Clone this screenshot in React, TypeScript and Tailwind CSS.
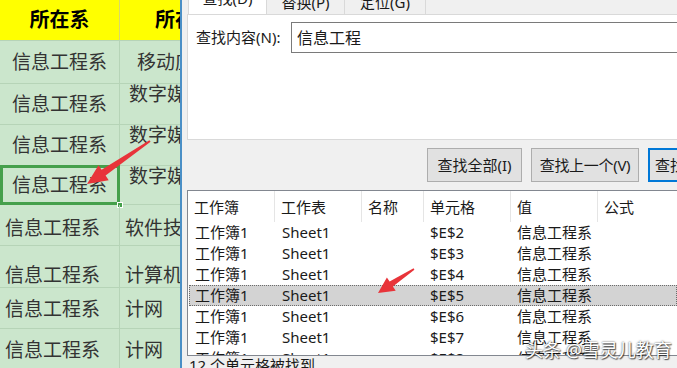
import React from 'react'

const cjk = "font-['Noto_Sans','Noto_Sans_CJK_SC',sans-serif]"

type Row = { h: number; a: string; aCls: string; b: string; bCls: string; selected?: boolean }

const sheetRows: Row[] = [
  { h: 43, a: '信息工程系', aCls: 'items-center justify-center', b: '移动应', bCls: 'items-center pl-[17px]' },
  { h: 41, a: '信息工程系', aCls: 'items-center justify-center', b: '数字媒体', bCls: 'items-start pl-[9px] pt-[1px]' },
  { h: 41, a: '信息工程系', aCls: 'items-center justify-center', b: '数字媒体', bCls: 'items-start pl-[9px] pt-[1px]' },
  { h: 39, a: '信息工程系', aCls: 'items-center justify-center', b: '数字媒体', bCls: 'items-start pl-[9px] pt-[1px]', selected: true },
  { h: 41, a: '信息工程系', aCls: 'items-center pl-[5px] pt-[6px]', b: '软件技术', bCls: 'items-center pl-[5px] pt-[6px]' },
  { h: 42, a: '信息工程系', aCls: 'items-end pl-[5px] pb-[2px]', b: '计算机', bCls: 'items-end pl-[5px] pb-[2px]' },
  { h: 41, a: '信息工程系', aCls: 'items-center pl-[5px] pt-[2px]', b: '计网', bCls: 'items-center pl-[5px] pt-[2px]' },
  { h: 40, a: '信息工程系', aCls: 'items-center pl-[5px] pt-[4px]', b: '计网', bCls: 'items-center pl-[5px] pt-[4px]' },
]

const cols = [
  { label: '工作簿', w: 87 },
  { label: '工作表', w: 87 },
  { label: '名称', w: 62 },
  { label: '单元格', w: 87 },
  { label: '值', w: 87 },
  { label: '公式', w: 120 },
]

const results = ['$E$2', '$E$3', '$E$4', '$E$5', '$E$6', '$E$7', '$E$8']

function Sheet() {
  return (
    <div className={`w-[180px] shrink-0 flex flex-col bg-[#cbe6cc] text-[#333] ${cjk}`}>
      <div className="h-[40px] shrink-0 flex bg-[#ffff00] text-black font-bold text-[20px]">
        <div className="w-[120px] flex items-center justify-center border-r border-[#d8d86a]">所在系</div>
        <div className="flex-1 flex items-center pl-[35px] whitespace-nowrap overflow-hidden">所在班级</div>
      </div>
      {sheetRows.map((r, i) => (
        <div key={i} className="flex shrink-0 border-t border-[#b6d4b7] text-[19px] leading-none" style={{ height: r.h }}>
          <div className={`relative w-[120px] flex border-r border-[#b6d4b7] ${r.aCls}`}>
            <span className="whitespace-nowrap">{r.a}</span>
            {r.selected && (
              <>
                <div className="absolute -top-[1px] left-0 right-[-1px] -bottom-[1px] border-[3px] border-[#45a04b]" />
                <div className="absolute right-[-4px] bottom-[-4px] w-[6px] h-[6px] bg-[#45a04b] border border-white" />
              </>
            )}
          </div>
          <div className={`flex-1 flex overflow-hidden ${r.bCls}`}>
            <span className="whitespace-nowrap">{r.b}</span>
          </div>
        </div>
      ))}
    </div>
  )
}

function FindDialog() {
  return (
    <div className={`flex-1 flex flex-col bg-[#f0f0f0] border-l-2 border-[#4a8fc6] pl-[5px] text-[15px] text-[#1a1a1a] ${cjk} overflow-hidden`}>
      {/* tabs, cut off at the top */}
      <div className="h-[14px] shrink-0 overflow-hidden flex items-end">
        <div className="flex h-[26px] items-stretch ml-[1px]">
          <div className="w-[79px] bg-white border-x border-[#d9d9d9] flex items-center justify-center pb-[5px]">查找(D)</div>
          <div className="w-[78px] border-r border-[#d9d9d9] flex items-center justify-center pt-[2px]">替换(P)</div>
          <div className="w-[81px] border-r border-[#d9d9d9] flex items-center justify-center pt-[2px]">定位(G)</div>
        </div>
      </div>

      {/* tab page */}
      <div className="h-[126px] shrink-0 bg-white border border-[#d9d9d9] border-r-0 pt-[7px] pl-[8px] flex">
        <div className="flex items-start h-[31px]">
          <div className="w-[95px] h-[31px] flex items-center whitespace-nowrap">查找内容(N):</div>
          <div className="w-[400px] h-[31px] border border-[#7a7a7a] border-r-0 flex items-center pl-[5px] text-[16px]">信息工程</div>
        </div>
      </div>

      {/* buttons */}
      <div className="h-[50px] shrink-0 flex items-start pt-[8px] pl-[240px] gap-[9px]">
        <button className="w-[95px] h-[34px] shrink-0 bg-[#e1e1e1] border border-[#adadad] whitespace-nowrap">查找全部(I)</button>
        <button className="w-[108px] h-[34px] shrink-0 bg-[#e1e1e1] border border-[#adadad] whitespace-nowrap tracking-[-0.3px]">查找上一个(V)</button>
        <button className="w-[110px] h-[34px] shrink-0 bg-[#e1e1e1] border-2 border-[#0078d7] whitespace-nowrap text-left pl-[5px]">查找下一个(F)</button>
      </div>

      {/* result list */}
      <div className="h-[166px] shrink-0 bg-white border border-[#828790] border-r-0 flex flex-col overflow-hidden">
        <div className="h-[31px] shrink-0 flex">
          {cols.map((c, i) => (
            <div key={i} className="shrink-0 flex items-center pl-[6px] pt-[2px] border-r border-[#e5e5e5]" style={{ width: c.w }}>
              {c.label}
            </div>
          ))}
        </div>
        {results.map((cell, i) => (
          <div
            key={i}
            className={`h-[21px] shrink-0 flex items-center leading-none ${i === 3 ? 'bg-[#d3d3d3] border border-dotted border-[#6b6b6b] ml-[1px]' : 'border border-transparent ml-[1px]'}`}
          >
            <div className="w-[86px] pl-[5px] shrink-0">工作簿1</div>
            <div className="w-[87px] pl-[6px] shrink-0">Sheet1</div>
            <div className="w-[62px] shrink-0" />
            <div className="w-[87px] pl-[5px] shrink-0">{cell}</div>
            <div className="w-[87px] pl-[5px] shrink-0 whitespace-nowrap">信息工程系</div>
          </div>
        ))}
      </div>

      <div className="pl-[2px] whitespace-nowrap leading-[18px]">12 个单元格被找到</div>
    </div>
  )
}

export default function App() {
  return (
    <div className="relative w-[677px] h-[368px] overflow-hidden flex bg-white">
      <Sheet />
      <FindDialog />

      {/* red annotation arrows */}
      <svg className="absolute inset-0 pointer-events-none" width="677" height="368" viewBox="0 0 677 368">
        <polygon
          fill="#e8343a"
          points="150.6,141.8 105.6,175.6 108.7,180.2 87,184 98.5,165.2 101.6,169.8 149.4,140.2"
        />
        <polygon
          fill="#e8343a"
          points="414.4,269.7 392.9,286.6 395.7,290.7 378,293 386.9,277.5 389.6,281.6 413.6,268.3"
        />
      </svg>

      {/* watermark */}
      <div
        className={`absolute left-[525px] top-[337px] text-[18px] text-white whitespace-nowrap ${cjk} [text-shadow:0_0_2px_rgba(0,0,0,0.8),1px_1px_1px_rgba(0,0,0,0.6)]`}
      >
        头条 @雪灵儿教育
      </div>
    </div>
  )
}
